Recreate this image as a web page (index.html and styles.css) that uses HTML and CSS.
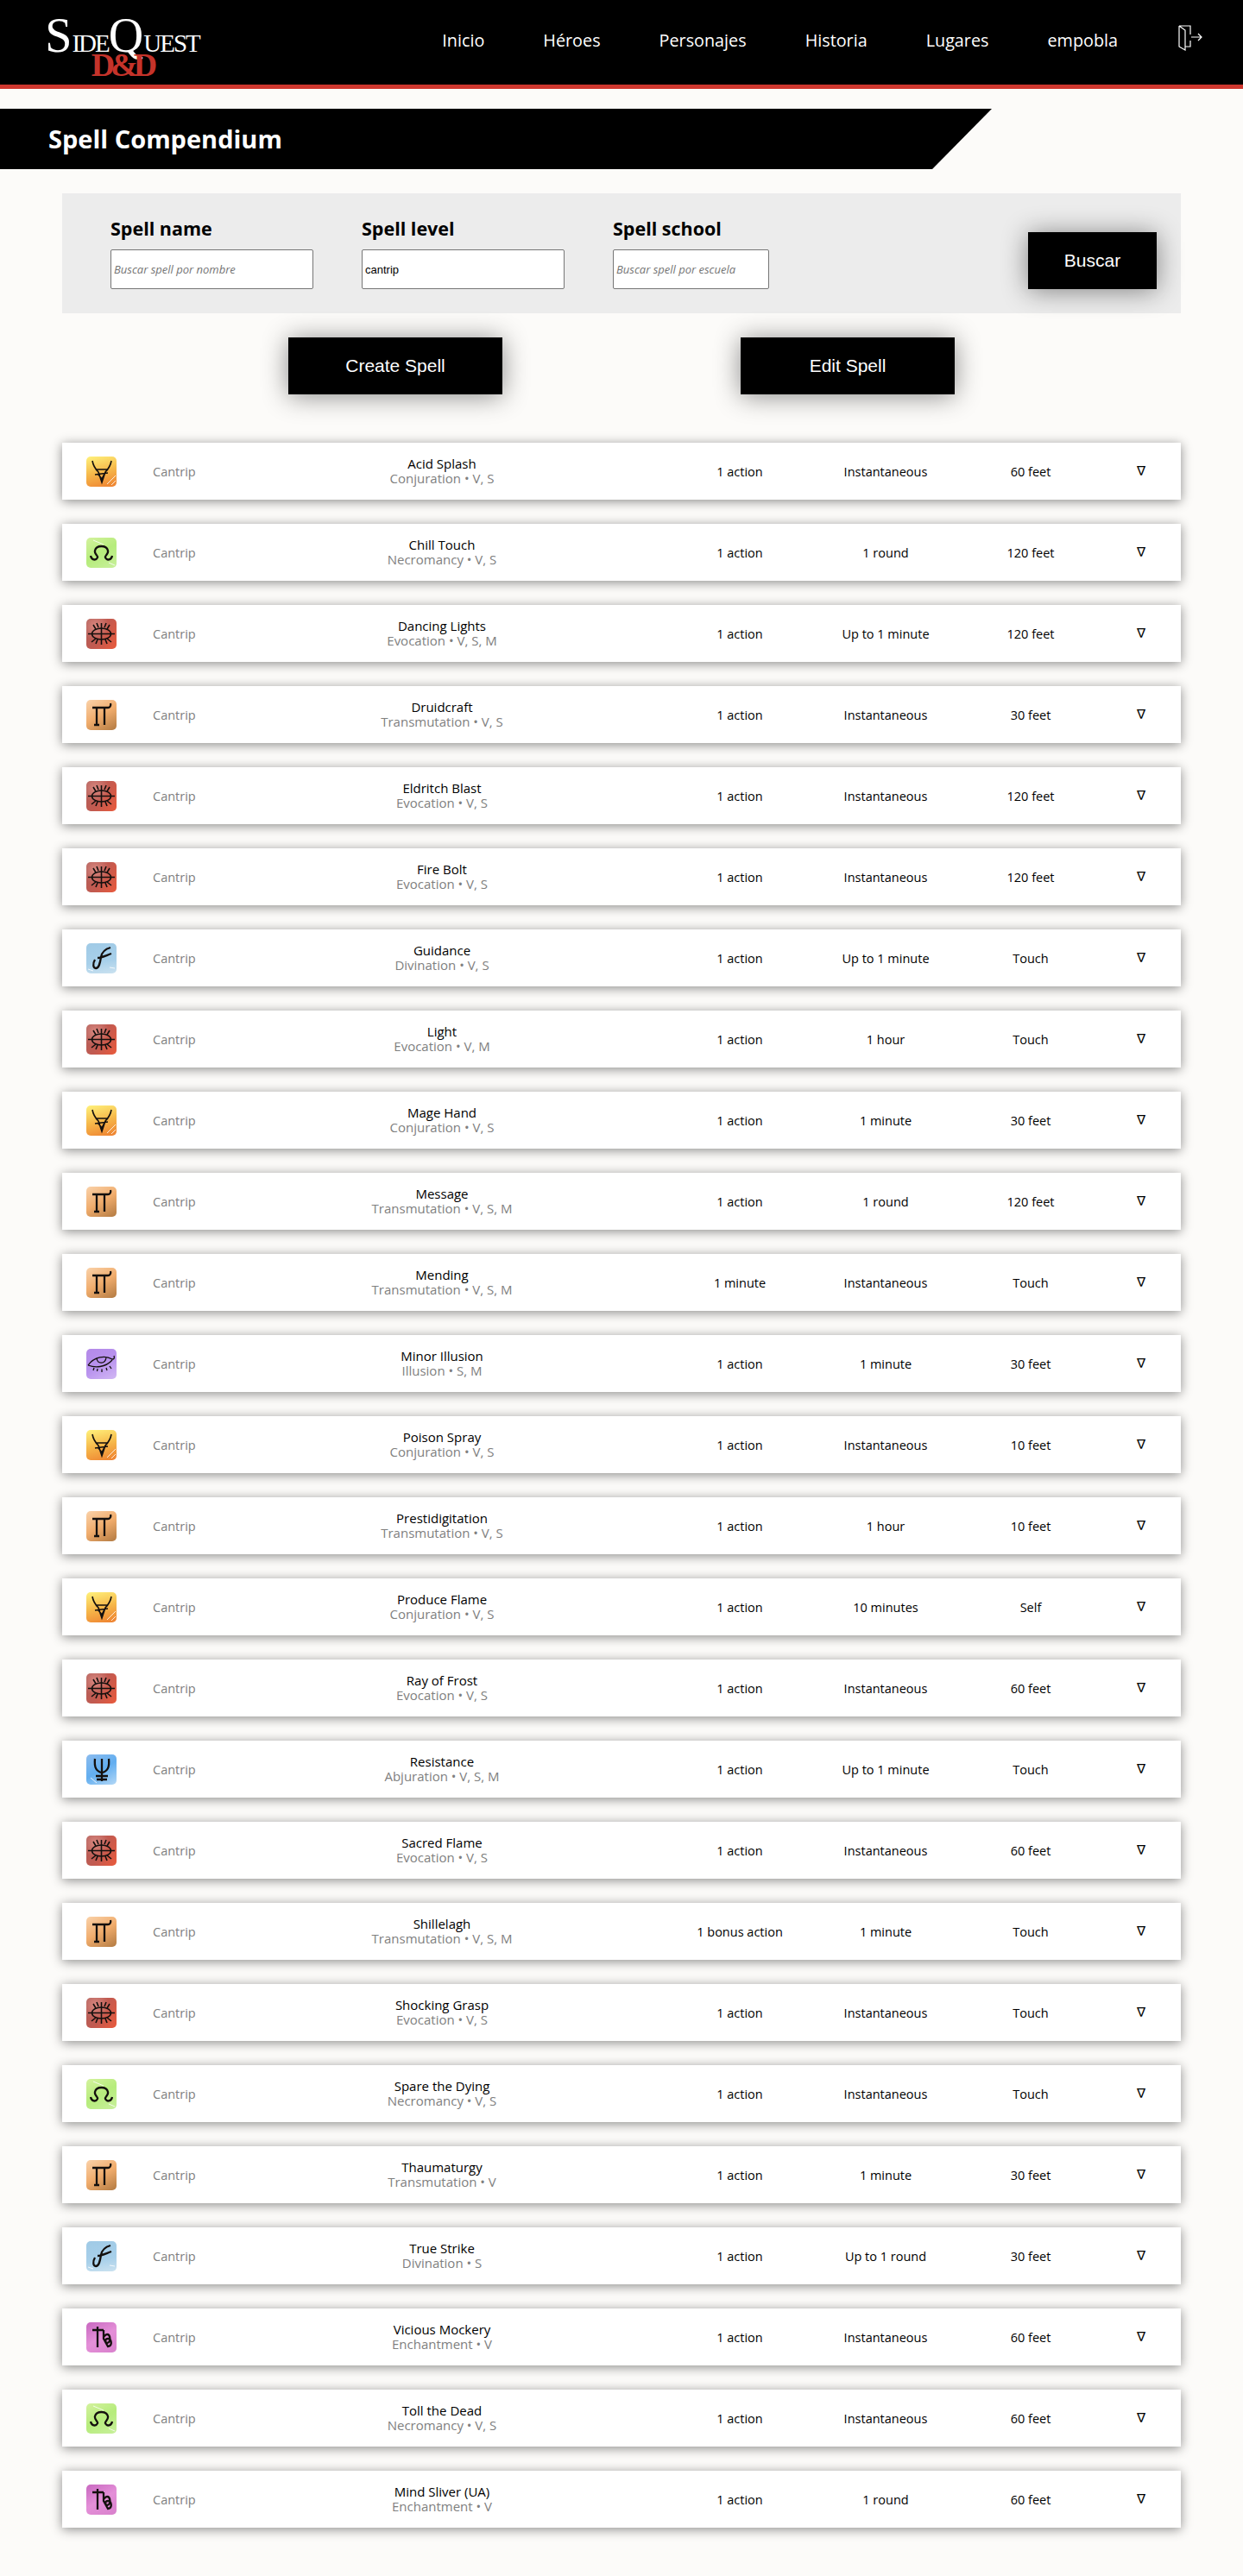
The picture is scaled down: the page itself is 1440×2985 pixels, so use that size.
FILE: index.html
```html
<!DOCTYPE html>
<html lang="es">
<head>
    <meta charset="UTF-8">
    <meta name="viewport" content="width=device-width, initial-scale=1.0">
    <title>SideQuest - Spell Compendium</title>
    <link rel="stylesheet" href="styles.css">
</head>
<body>
    <svg class="icon-defs" aria-hidden="true">
        <symbol id="sym-conjuration" viewBox="0 0 35 35">
            <path class="thin" d="M7 5C8 11 11 15 14 18L18 30L22 18C25 15 28 11 29 5M11 15H25M10 21L25 19M14 21L18 26L21 20"/>
            <path class="streak" d="M24 32L34 22M29 33L34 28"/>
        </symbol>
        <symbol id="sym-necromancy" viewBox="0 0 35 35">
            <path class="thick" d="M5 21C6 26 11 27 13 23C14 21 9 19 10 15C11 11 14 10 17.500 10C21 10 24 11 25 15C26 19 21 21 22 23C24 27 29 26 30 21"/>
            <path class="streak" d="M8 3L20 8M26 29L33 32"/>
        </symbol>
        <symbol id="sym-evocation" viewBox="0 0 35 35">
            <ellipse class="thin" cx="17.500" cy="17.500" rx="11" ry="6.500"/>
            <path class="thin" d="M2 17.500H33M17.500 5V30M8 7L11 12M27 7L24 12M12 5L14 10M23 5L21 10M6 27L11 23M29 27L24 23M11 29L13 24M24 29L22 24"/>
        </symbol>
        <symbol id="sym-transmutation" viewBox="0 0 35 35">
            <path class="thick" d="M7 9H25C27 9 29 7 28 4M12 9V29M21 9V29M9 29H15"/>
        </symbol>
        <symbol id="sym-divination" viewBox="0 0 35 35">
            <path class="thick" d="M10 19C7 24 8 29 11 29C15 29 16 22 17 16C18 10 21 7 28 5M13 17C17 17 21 15 29 12"/>
            <path class="streak" d="M2 30L8 32M27 28L33 29"/>
        </symbol>
        <symbol id="sym-illusion" viewBox="0 0 35 35">
            <path class="eye" d="M2 19C9 9 22 7 30 12C32 12 33 11 32 8M2 19C10 22 22 22 30 13M12 11C13 18 22 18 23 10M9 22L8 25M13 23L12.500 26M18 23.500V27M23 22L24 25M27 20L29 23"/>
        </symbol>
        <symbol id="sym-abjuration" viewBox="0 0 35 35">
            <path class="thick" d="M18 5V31M10 5C9 14 11 20 18 21C25 20 27 14 26 5M11 25H25M12 29H24"/>
            <path class="streak" d="M5 27L12 33"/>
        </symbol>
        <symbol id="sym-enchantment" viewBox="0 0 35 35">
            <path class="thick" d="M7 9H20M13 5V29M20 9V19L25 28C31 27 29 19 25 19C22 19 21 23 24 24C29 23 28 14 24 14C22 14 21 16 20 17"/>
        </symbol>
    </svg>

    <header class="site-header">
        <a href="#" class="logo">
            <span class="logo-name"><span class="logo-big">S</span>ide<span class="logo-big">Q</span>uest</span>
            <span class="logo-dnd">D&amp;D</span>
        </a>
        <nav class="main-nav">
            <a href="#">Inicio</a>
            <a href="#">Héroes</a>
            <a href="#">Personajes</a>
            <a href="#">Historia</a>
            <a href="#">Lugares</a>
            <a href="#">empobla</a>
            <a href="#" class="logout" aria-label="Salir">
                <svg width="30" height="30" viewBox="0 0 30 30">
                    <path d="M3 1H16V11M16 18V25H10M3 1V25L10 29V6L3 1M17 14H29M25 10L29 14L25 18"/>
                </svg>
            </a>
        </nav>
    </header>

    <h1 class="page-title">Spell Compendium</h1>

    <form class="search-panel">
        <div class="field">
            <label for="spell-name">Spell name</label>
            <input type="text" id="spell-name" placeholder="Buscar spell por nombre">
        </div>
        <div class="field">
            <label for="spell-level">Spell level</label>
            <input type="text" id="spell-level" value="cantrip">
        </div>
        <div class="field field-school">
            <label for="spell-school">Spell school</label>
            <input type="text" id="spell-school" placeholder="Buscar spell por escuela">
        </div>
        <button type="button" class="button button-search">Buscar</button>
    </form>

    <div class="spell-actions">
        <a href="#" class="button">Create Spell</a>
        <a href="#" class="button">Edit Spell</a>
    </div>

    <ul class="spell-list">
        <li class="spell-row"><svg class="school conjuration"><use href="#sym-conjuration"/></svg><span class="level">Cantrip</span><div class="spell-name"><strong>Acid Splash</strong><span>Conjuration • V, S</span></div><span>1 action</span><span>Instantaneous</span><span>60 feet</span><span class="toggle">∇</span></li>
        <li class="spell-row"><svg class="school necromancy"><use href="#sym-necromancy"/></svg><span class="level">Cantrip</span><div class="spell-name"><strong>Chill Touch</strong><span>Necromancy • V, S</span></div><span>1 action</span><span>1 round</span><span>120 feet</span><span class="toggle">∇</span></li>
        <li class="spell-row"><svg class="school evocation"><use href="#sym-evocation"/></svg><span class="level">Cantrip</span><div class="spell-name"><strong>Dancing Lights</strong><span>Evocation • V, S, M</span></div><span>1 action</span><span>Up to 1 minute</span><span>120 feet</span><span class="toggle">∇</span></li>
        <li class="spell-row"><svg class="school transmutation"><use href="#sym-transmutation"/></svg><span class="level">Cantrip</span><div class="spell-name"><strong>Druidcraft</strong><span>Transmutation • V, S</span></div><span>1 action</span><span>Instantaneous</span><span>30 feet</span><span class="toggle">∇</span></li>
        <li class="spell-row"><svg class="school evocation"><use href="#sym-evocation"/></svg><span class="level">Cantrip</span><div class="spell-name"><strong>Eldritch Blast</strong><span>Evocation • V, S</span></div><span>1 action</span><span>Instantaneous</span><span>120 feet</span><span class="toggle">∇</span></li>
        <li class="spell-row"><svg class="school evocation"><use href="#sym-evocation"/></svg><span class="level">Cantrip</span><div class="spell-name"><strong>Fire Bolt</strong><span>Evocation • V, S</span></div><span>1 action</span><span>Instantaneous</span><span>120 feet</span><span class="toggle">∇</span></li>
        <li class="spell-row"><svg class="school divination"><use href="#sym-divination"/></svg><span class="level">Cantrip</span><div class="spell-name"><strong>Guidance</strong><span>Divination • V, S</span></div><span>1 action</span><span>Up to 1 minute</span><span>Touch</span><span class="toggle">∇</span></li>
        <li class="spell-row"><svg class="school evocation"><use href="#sym-evocation"/></svg><span class="level">Cantrip</span><div class="spell-name"><strong>Light</strong><span>Evocation • V, M</span></div><span>1 action</span><span>1 hour</span><span>Touch</span><span class="toggle">∇</span></li>
        <li class="spell-row"><svg class="school conjuration"><use href="#sym-conjuration"/></svg><span class="level">Cantrip</span><div class="spell-name"><strong>Mage Hand</strong><span>Conjuration • V, S</span></div><span>1 action</span><span>1 minute</span><span>30 feet</span><span class="toggle">∇</span></li>
        <li class="spell-row"><svg class="school transmutation"><use href="#sym-transmutation"/></svg><span class="level">Cantrip</span><div class="spell-name"><strong>Message</strong><span>Transmutation • V, S, M</span></div><span>1 action</span><span>1 round</span><span>120 feet</span><span class="toggle">∇</span></li>
        <li class="spell-row"><svg class="school transmutation"><use href="#sym-transmutation"/></svg><span class="level">Cantrip</span><div class="spell-name"><strong>Mending</strong><span>Transmutation • V, S, M</span></div><span>1 minute</span><span>Instantaneous</span><span>Touch</span><span class="toggle">∇</span></li>
        <li class="spell-row"><svg class="school illusion"><use href="#sym-illusion"/></svg><span class="level">Cantrip</span><div class="spell-name"><strong>Minor Illusion</strong><span>Illusion • S, M</span></div><span>1 action</span><span>1 minute</span><span>30 feet</span><span class="toggle">∇</span></li>
        <li class="spell-row"><svg class="school conjuration"><use href="#sym-conjuration"/></svg><span class="level">Cantrip</span><div class="spell-name"><strong>Poison Spray</strong><span>Conjuration • V, S</span></div><span>1 action</span><span>Instantaneous</span><span>10 feet</span><span class="toggle">∇</span></li>
        <li class="spell-row"><svg class="school transmutation"><use href="#sym-transmutation"/></svg><span class="level">Cantrip</span><div class="spell-name"><strong>Prestidigitation</strong><span>Transmutation • V, S</span></div><span>1 action</span><span>1 hour</span><span>10 feet</span><span class="toggle">∇</span></li>
        <li class="spell-row"><svg class="school conjuration"><use href="#sym-conjuration"/></svg><span class="level">Cantrip</span><div class="spell-name"><strong>Produce Flame</strong><span>Conjuration • V, S</span></div><span>1 action</span><span>10 minutes</span><span>Self</span><span class="toggle">∇</span></li>
        <li class="spell-row"><svg class="school evocation"><use href="#sym-evocation"/></svg><span class="level">Cantrip</span><div class="spell-name"><strong>Ray of Frost</strong><span>Evocation • V, S</span></div><span>1 action</span><span>Instantaneous</span><span>60 feet</span><span class="toggle">∇</span></li>
        <li class="spell-row"><svg class="school abjuration"><use href="#sym-abjuration"/></svg><span class="level">Cantrip</span><div class="spell-name"><strong>Resistance</strong><span>Abjuration • V, S, M</span></div><span>1 action</span><span>Up to 1 minute</span><span>Touch</span><span class="toggle">∇</span></li>
        <li class="spell-row"><svg class="school evocation"><use href="#sym-evocation"/></svg><span class="level">Cantrip</span><div class="spell-name"><strong>Sacred Flame</strong><span>Evocation • V, S</span></div><span>1 action</span><span>Instantaneous</span><span>60 feet</span><span class="toggle">∇</span></li>
        <li class="spell-row"><svg class="school transmutation"><use href="#sym-transmutation"/></svg><span class="level">Cantrip</span><div class="spell-name"><strong>Shillelagh</strong><span>Transmutation • V, S, M</span></div><span>1 bonus action</span><span>1 minute</span><span>Touch</span><span class="toggle">∇</span></li>
        <li class="spell-row"><svg class="school evocation"><use href="#sym-evocation"/></svg><span class="level">Cantrip</span><div class="spell-name"><strong>Shocking Grasp</strong><span>Evocation • V, S</span></div><span>1 action</span><span>Instantaneous</span><span>Touch</span><span class="toggle">∇</span></li>
        <li class="spell-row"><svg class="school necromancy"><use href="#sym-necromancy"/></svg><span class="level">Cantrip</span><div class="spell-name"><strong>Spare the Dying</strong><span>Necromancy • V, S</span></div><span>1 action</span><span>Instantaneous</span><span>Touch</span><span class="toggle">∇</span></li>
        <li class="spell-row"><svg class="school transmutation"><use href="#sym-transmutation"/></svg><span class="level">Cantrip</span><div class="spell-name"><strong>Thaumaturgy</strong><span>Transmutation • V</span></div><span>1 action</span><span>1 minute</span><span>30 feet</span><span class="toggle">∇</span></li>
        <li class="spell-row"><svg class="school divination"><use href="#sym-divination"/></svg><span class="level">Cantrip</span><div class="spell-name"><strong>True Strike</strong><span>Divination • S</span></div><span>1 action</span><span>Up to 1 round</span><span>30 feet</span><span class="toggle">∇</span></li>
        <li class="spell-row"><svg class="school enchantment"><use href="#sym-enchantment"/></svg><span class="level">Cantrip</span><div class="spell-name"><strong>Vicious Mockery</strong><span>Enchantment • V</span></div><span>1 action</span><span>Instantaneous</span><span>60 feet</span><span class="toggle">∇</span></li>
        <li class="spell-row"><svg class="school necromancy"><use href="#sym-necromancy"/></svg><span class="level">Cantrip</span><div class="spell-name"><strong>Toll the Dead</strong><span>Necromancy • V, S</span></div><span>1 action</span><span>Instantaneous</span><span>60 feet</span><span class="toggle">∇</span></li>
        <li class="spell-row"><svg class="school enchantment"><use href="#sym-enchantment"/></svg><span class="level">Cantrip</span><div class="spell-name"><strong>Mind Sliver (UA)</strong><span>Enchantment • V</span></div><span>1 action</span><span>1 round</span><span>60 feet</span><span class="toggle">∇</span></li>
    </ul>
</body>
</html>
```

FILE: styles.css
```css
body {
    font-family: 'Open Sans', sans-serif;
    margin: 0;
    background-color: #fcfbf9;
    color: #000;
}
.icon-defs {
    display: none;
}

/* Header */
.site-header {
    display: flex;
    justify-content: space-between;
    align-items: flex-start;
    height: 98px;
    padding: 0 47px 0 53px;
    background-color: #000;
    border-bottom: 5px solid #cf372e;
}
.logo {
    display: flex;
    flex-direction: column;
    align-items: center;
    width: 177px;
    padding-top: 17px;
    text-decoration: none;
    font-family: 'Liberation Serif', serif;
}
.logo-name {
    color: #fff;
    font-size: 29px;
    line-height: 48px;
    text-transform: uppercase;
    letter-spacing: -2px;
    white-space: nowrap;
}
.logo-big {
    font-size: 56px;
    line-height: 48px;
    letter-spacing: 0;
}
.logo-dnd {
    margin-top: -15px;
    color: #c5332a;
    font-size: 38px;
    font-weight: 700;
    line-height: 32px;
    letter-spacing: -5px;
}
.main-nav {
    display: flex;
    align-items: flex-start;
    gap: 68px;
    padding-top: 33px;
}
.main-nav a {
    color: #fff;
    font-size: 19.800px;
    line-height: 28px;
    text-decoration: none;
}
.main-nav .logout {
    margin-top: -4px;
    line-height: 0;
}
.logout path {
    fill: none;
    stroke: #fff;
    stroke-width: 1.2;
}

/* Title banner */
.page-title {
    width: 1149px;
    height: 70px;
    margin: 23px 0 0;
    padding-left: 56px;
    box-sizing: border-box;
    background-color: #000;
    color: #fff;
    font-size: 29px;
    font-weight: 700;
    line-height: 70px;
    clip-path: polygon(0 0, 100% 0, 1080px 100%, 0 100%);
}

/* Search */
.search-panel {
    display: flex;
    align-items: flex-end;
    gap: 56px;
    height: 139px;
    margin: 28px 72px 0;
    padding: 0 28px 28px 56px;
    box-sizing: border-box;
    background-color: #ececec;
}
.field label {
    display: block;
    margin-bottom: 10px;
    font-size: 21.500px;
    font-weight: 700;
    line-height: 28px;
}
.field input {
    display: block;
    width: 235px;
    height: 46px;
    padding: 0 3px;
    box-sizing: border-box;
    border: 1px solid #767676;
    border-radius: 2px;
    background-color: #fff;
    font-family: 'Liberation Sans', sans-serif;
    font-size: 13px;
}
.field input::placeholder {
    font-family: 'Open Sans', sans-serif;
    font-size: 13px;
    font-style: italic;
    color: #757575;
}
.field-school input {
    width: 181px;
}
.button {
    display: flex;
    align-items: center;
    justify-content: center;
    width: 248px;
    height: 66px;
    border: none;
    background-color: #000;
    color: #fff;
    font-family: 'Liberation Sans', sans-serif;
    font-size: 21px;
    text-decoration: none;
    box-shadow: 0 2px 30px rgba(0, 0, 0, 0.45);
}
.button-search {
    width: 149px;
    margin-left: auto;
}
.spell-actions {
    display: flex;
    justify-content: center;
    gap: 276px;
    margin-top: 28px;
}

/* Spell rows */
.spell-list {
    display: flex;
    flex-direction: column;
    gap: 28px;
    margin: 56px 72px 0;
    padding: 0 0 56px;
    list-style: none;
}
.spell-row {
    display: grid;
    grid-template-columns: 105px 79px 512px 178px 160px 176px 80px;
    align-items: center;
    justify-items: center;
    height: 66px;
    background-color: #fff;
    box-shadow: 0 2px 12px rgba(0, 0, 0, 0.45);
    font-size: 14.500px;
    line-height: 17px;
}
.school {
    justify-self: start;
    width: 35px;
    height: 35px;
    margin-left: 28px;
    border-radius: 5px;
    fill: none;
    stroke: #14100e;
}
.thin {
    stroke-width: 1.6;
}
.eye {
    stroke-width: 1.3;
}
.thick {
    stroke-width: 2.300;
}
.streak {
    stroke: rgba(255, 255, 255, 0.8);
    stroke-width: 1;
}
.conjuration { background: linear-gradient(165deg, #fff27c, #f6b84a 50%, #ee8030); }
.necromancy { background: linear-gradient(150deg, #d4f29e, #b6ec7c 50%, #c8f09c); }
.evocation { background: radial-gradient(circle at 30% 25%, #d98880, transparent 45%), linear-gradient(120deg, #b0605c, #c25a50 50%, #ea5a3c); }
.transmutation { background: linear-gradient(150deg, #fad2aa, #f0ac6c 50%, #b27a42); }
.divination { background: linear-gradient(170deg, #a0cae6, #a8d0ea 60%, #cbe2f0); }
.illusion { background: linear-gradient(150deg, #b48ae8, #b892ee 50%, #d2b8f4); }
.abjuration { background: linear-gradient(150deg, #8cbcee, #62aef0 50%, #b4d8f6); }
.enchantment { background: linear-gradient(150deg, #c868c0, #e490d8 50%, #d880cc); }
.level {
    justify-self: start;
    color: #808080;
}
.spell-name {
    display: flex;
    flex-direction: column;
    align-items: center;
    font-size: 15px;
}
.spell-name strong {
    font-weight: 400;
}
.spell-name span {
    color: #808080;
}
.toggle {
    font-family: 'DejaVu Sans', sans-serif;
    font-size: 15px;
}
```
